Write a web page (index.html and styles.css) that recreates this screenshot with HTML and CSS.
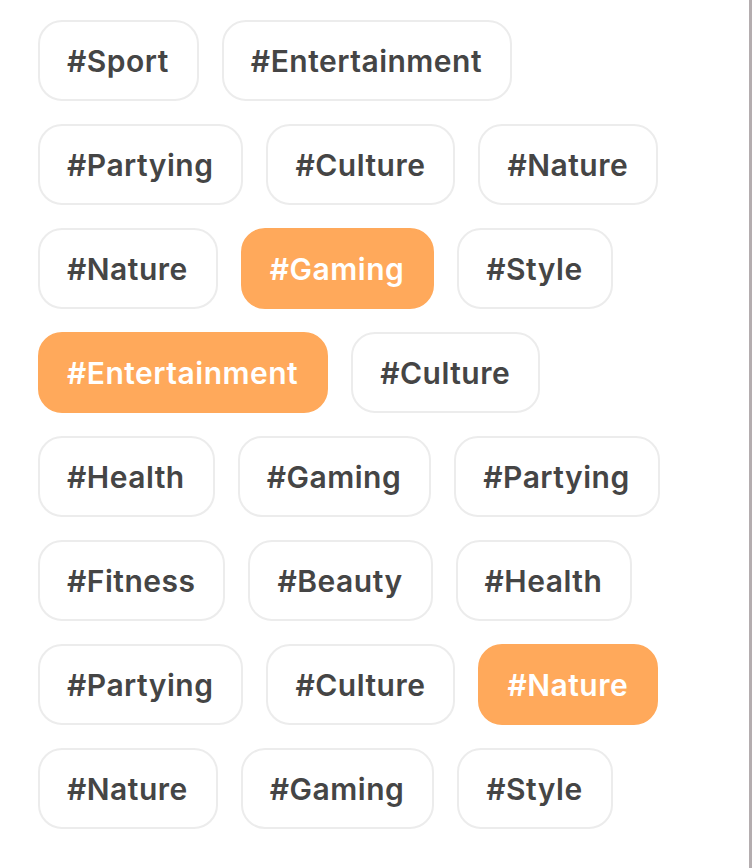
FILE: index.html
```html
<!DOCTYPE html>
<html>
<head>
<meta charset="utf-8">
<link rel="stylesheet" href="styles.css">
</head>
<body>
<div class="page">
  <div class="tags">
    <div class="row"><span class="tag">#Sport</span><span class="tag">#Entertainment</span></div>
    <div class="row"><span class="tag">#Partying</span><span class="tag">#Culture</span><span class="tag">#Nature</span></div>
    <div class="row"><span class="tag">#Nature</span><span class="tag active">#Gaming</span><span class="tag">#Style</span></div>
    <div class="row"><span class="tag active">#Entertainment</span><span class="tag">#Culture</span></div>
    <div class="row"><span class="tag">#Health</span><span class="tag">#Gaming</span><span class="tag">#Partying</span></div>
    <div class="row"><span class="tag">#Fitness</span><span class="tag">#Beauty</span><span class="tag">#Health</span></div>
    <div class="row"><span class="tag">#Partying</span><span class="tag">#Culture</span><span class="tag active">#Nature</span></div>
    <div class="row"><span class="tag">#Nature</span><span class="tag">#Gaming</span><span class="tag">#Style</span></div>
  </div>
</div>
</body>
</html>
```
FILE: styles.css
```css
html, body {
  margin: 0;
  padding: 0;
  background: #ffffff;
}
.page {
  width: 749px;
  height: 868px;
  border-right: 3px solid #b4adaf;
  box-sizing: content-box;
}
.tags {
  display: flex;
  flex-direction: column;
  gap: 23px;
  padding: 20px 0 0 38px;
}
.row {
  display: flex;
  gap: 23px;
}
.tag {
  display: inline-flex;
  align-items: center;
  height: 81px;
  box-sizing: border-box;
  padding: 0 28px 0 27px;
  border: 2px solid #ececec;
  border-radius: 24px;
  font-family: Inter, "Liberation Sans", sans-serif;
  font-weight: 600;
  font-size: 30px;
  letter-spacing: 0.5px;
  color: #454545;
}
.tag.active {
  background: #ffa95b;
  border-color: #ffa95b;
  color: #ffffff;
}
```
